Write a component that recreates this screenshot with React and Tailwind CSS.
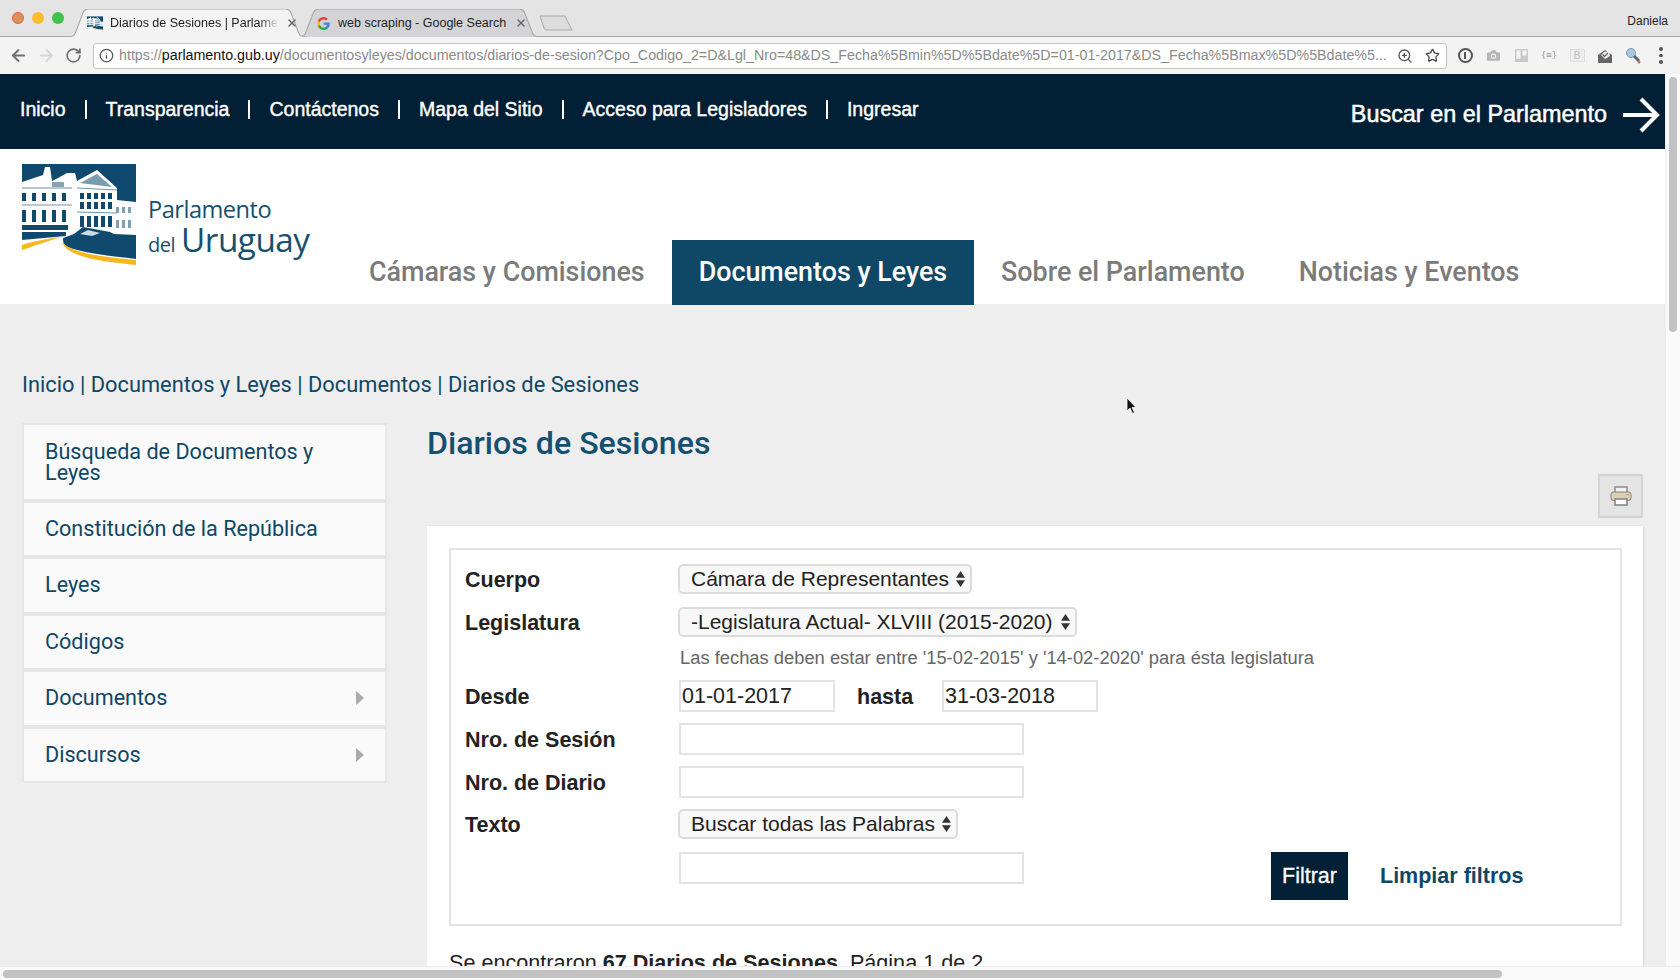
import React from "react";
import { ArrowLeft, ArrowRight, RotateCw, Info, ZoomIn, Star, Camera, X } from "lucide-react";

const navLinks = ["Inicio", "Transparencia", "Contáctenos", "Mapa del Sitio", "Acceso para Legisladores", "Ingresar"];
const tabs = ["Cámaras y Comisiones", "Documentos y Leyes", "Sobre el Parlamento", "Noticias y Eventos"];
const menu = ["Constitución de la República", "Leyes", "Códigos", "Documentos", "Discursos"];
const crumbs = ["Inicio", "Documentos y Leyes", "Documentos", "Diarios de Sesiones"];

const LogoMark = ({ className }) => (
  <svg viewBox="0 0 114 101" className={className}>
    <rect width="114" height="101" fill="#fff" />
    <rect width="114" height="72" fill="#0f4a6e" />
    {/* building */}
    <path d="M0 18 L18 12 L21 11 L23 3 L28 3 L30 17 L36 14 L45 9 L53 9 L55 17 L75 6 L95 24 L95 36 L114 38 L114 72 L60 72 L40 73 L0 81 Z" fill="#fff" />
    <path d="M58 19 L75 10 L90 23 Z" fill="#0f4a6e" opacity="0.55" />
    <path d="M0 24 L50 24 M55 24 L95 26 M0 41 L50 41 M55 48 L95 49" stroke="#0f4a6e" strokeWidth="1" opacity="0.6" />
    <path d="M30 18 H42 V23 H30 Z" fill="#0f4a6e" opacity="0.5" />
    {[0, 10, 20, 30, 40].map((x) => (
      <g key={x} fill="#0f4a6e">
        <rect x={x} y="29" width="4" height="8" />
        <rect x={x} y="46" width="4" height="12" />
      </g>
    ))}
    {[58, 65, 72, 79, 86].map((x) => (
      <g key={x} fill="#0f4a6e">
        <rect x={x} y="29" width="4" height="6" />
        <rect x={x} y="38" width="4" height="7" />
        <rect x={x} y="52" width="4" height="11" />
      </g>
    ))}
    {[94, 100, 106].map((x) => (
      <g key={x} fill="#7f9fb3">
        <rect x={x} y="43" width="3" height="6" />
        <rect x={x} y="56" width="3" height="8" />
      </g>
    ))}
    <path d="M0 61 H46 V66 H0 Z M0 68 H44 V72 L0 76 Z" fill="#0f4a6e" />
    <path d="M41 74 L52 70 L61 63 L72 65 L88 68 L92 70 L114 71 L114 95 C90 92 60 89 46 83 C42 81 41 79 41 74 Z" fill="#0f4a6e" />
    <path d="M58 70 L66 66 L78 69 L70 72 Z" fill="#fff" opacity="0.8" />
    <path d="M40 78 C50 90 85 93 114 96 L114 101 C85 98 45 94 40 78 Z" fill="#f9b71f" />
    <path d="M0 81 C12 77 28 74 40 73 C28 76 12 82 0 86 Z" fill="#f9b71f" />
  </svg>
);

const GoogleG = () => (
  <svg viewBox="0 0 24 24" className="w-[15px] h-[15px] shrink-0">
    <path d="M22 12.200c0-.7-.1-1.400-.2-2H12v3.900h5.600c-.2 1.300-1 2.400-2.100 3.100v2.500h3.400C20.800 18 22 15.400 22 12.200z" fill="#4285f4" />
    <path d="M12 22.500c2.800 0 5.200-.9 6.900-2.500l-3.400-2.600c-.9.600-2.100 1-3.500 1-2.700 0-5-1.800-5.800-4.300H3.100v2.700C4.800 20.200 8.100 22.500 12 22.500z" fill="#34a853" />
    <path d="M6.200 14.100c-.2-.6-.3-1.300-.3-2.100s.1-1.400.3-2.100V7.200H3.100C2.400 8.600 2 10.200 2 12s.4 3.400 1.100 4.800z" fill="#fbbc05" />
    <path d="M12 5.600c1.500 0 2.900.5 4 1.500l3-3C17.200 2.500 14.800 1.500 12 1.500 8.100 1.500 4.800 3.800 3.100 7.200l3.100 2.700C7 7.400 9.300 5.600 12 5.600z" fill="#ea4335" />
  </svg>
);

const TabShape = ({ fill, stroke }) => (
  <svg viewBox="0 0 220 28" preserveAspectRatio="none" className="absolute inset-0 w-full h-full">
    <path d="M0 28 C6 28 7 26 8 23 L15 3 C16 1 17 0 20 0 H200 C203 0 204 1 205 3 L212 23 C213 26 214 28 220 28" fill={fill} stroke={stroke} />
  </svg>
);

const ChromeBar = () => (
  <div className="h-[74px] shrink-0 font-['Liberation_Sans',sans-serif]">
    <div className="h-[37px] bg-[#e4e4e4] border-b border-[#a9a9a9] flex items-end pl-[12px] relative">
      <div className="flex gap-[8px] items-center self-center mr-[3px]">
        <span className="w-[12px] h-[12px] rounded-full bg-[#d9925c] border border-[#e2643c]" />
        <span className="w-[12px] h-[12px] rounded-full bg-[#fcbc2e]" />
        <span className="w-[12px] h-[12px] rounded-full bg-[#3fc34a]" />
      </div>
      <div className="relative w-[240px] h-[28px] mb-[-1px] flex items-center pl-[20px] pr-[9px] gap-[7px] z-10">
        <TabShape fill="#f3f3f3" stroke="#a9a9a9" />
        <LogoMark className="relative w-[16px] h-[15px] shrink-0" />
        <span className="relative flex-1 overflow-hidden whitespace-nowrap text-[12.500px] text-[#222] [mask-image:linear-gradient(to_right,black_88%,transparent)]">Diarios de Sesiones | Parlamento</span>
        <X className="relative w-[12px] h-[12px] text-[#666] shrink-0" strokeWidth={3} />
      </div>
      <div className="relative w-[244px] h-[28px] mb-[-1px] ml-[-10px] flex items-center pl-[19px] pr-[14px] gap-[7px]">
        <TabShape fill="#d4d4d6" stroke="#a9a9a9" />
        <span className="relative"><GoogleG /></span>
        <span className="relative flex-1 overflow-hidden whitespace-nowrap text-[12.500px] text-[#222]">web scraping - Google Search</span>
        <X className="relative w-[12px] h-[12px] text-[#666] shrink-0" strokeWidth={3} />
      </div>
      <svg viewBox="0 0 34 16" className="w-[34px] h-[16px] mb-[5px] ml-[-2px]">
        <path d="M1 1 H25 C26 1 27 2 27 3 L33 15 H7 C6 15 5 14 5 13 Z" fill="#dcdcdc" stroke="#a9a9a9" />
      </svg>
      <span className="absolute right-[12px] top-[12px] text-[12px] text-[#222]">Daniela</span>
    </div>
    <div className="h-[37px] bg-[#f3f3f3] flex items-center">
      <div className="w-[93px] flex items-center pl-[9px] gap-[9px] shrink-0">
        <ArrowLeft className="w-[19px] h-[19px] text-[#6e6e6e]" strokeWidth={2.4} />
        <ArrowRight className="w-[19px] h-[19px] text-[#d6d6d6]" strokeWidth={2.4} />
        <RotateCw className="w-[17px] h-[17px] text-[#6e6e6e]" strokeWidth={2.4} />
      </div>
      <div className="w-[1354px] h-[26px] bg-white border border-[#c4c4c4] rounded-[3px] flex items-center pl-[5px] pr-[6px] shrink-0">
        <Info className="w-[15px] h-[15px] text-[#555] shrink-0" strokeWidth={2} />
        <span className="flex-1 min-w-0 ml-[5px] overflow-hidden whitespace-nowrap text-[14.250px] text-[#8a8a8a]">
          https://<span className="text-[#111]">parlamento.gub.uy</span>/documentosyleyes/documentos/diarios-de-sesion?Cpo_Codigo_2=D&amp;Lgl_Nro=48&amp;DS_Fecha%5Bmin%5D%5Bdate%5D=01-01-2017&amp;DS_Fecha%5Bmax%5D%5Bdate%5...
        </span>
        <ZoomIn className="w-[16px] h-[16px] text-[#555] shrink-0 ml-[8px]" strokeWidth={2} />
        <Star className="w-[15px] h-[15px] text-[#444] shrink-0 ml-[12px]" strokeWidth={2} />
      </div>
      <div className="flex-1 grid grid-cols-[repeat(8,28px)] justify-items-center items-center pl-[4px]">
        <span className="w-[15px] h-[15px] rounded-full border-2 border-[#555] flex items-center justify-center">
          <span className="w-[2px] h-[7px] bg-[#555]" />
        </span>
        <Camera className="w-[17px] h-[17px] text-[#f3f3f3]" fill="#b5b5b5" strokeWidth={1.500} />
        <svg viewBox="0 0 14 14" className="w-[13px] h-[13px]">
          <rect width="14" height="14" fill="#c8c8c8" />
          <rect x="1.500" y="1.500" width="4.500" height="9" fill="#f3f3f3" />
          <rect x="8" y="1.500" width="4.500" height="5.500" fill="#f3f3f3" />
        </svg>
        <span className="text-[9px] text-[#999] font-['DejaVu_Sans_Mono',monospace]">{"{≡}"}</span>
        <span className="w-[15px] h-[13px] border border-[#ddd] bg-[#eee] text-[10px] leading-[11px] text-center text-[#bbb]">B</span>
        <svg viewBox="0 0 16 16" className="w-[16px] h-[16px]">
          <path d="M1 7 L8 2 L15 7 V15 H1 Z" fill="#666" />
          <path d="M4 7 L7 4 L12 3 L13 8 L8 11 Z" fill="#f3f3f3" />
          <path d="M5.500 6.500 L7.500 8.500 L11 5" fill="none" stroke="#666" strokeWidth="1.300" />
        </svg>
        <svg viewBox="0 0 18 18" className="w-[18px] h-[18px]">
          <circle cx="7" cy="6" r="4.500" fill="#a9c7dd" stroke="#7e9db5" />
          <path d="M10 9 L15 14" stroke="#4f6880" strokeWidth="3" />
          <circle cx="15" cy="15" r="1.500" fill="#c8734f" />
        </svg>
        <span className="flex flex-col gap-[3px]">
          <span className="w-[3.500px] h-[3.500px] rounded-full bg-[#555]" />
          <span className="w-[3.500px] h-[3.500px] rounded-full bg-[#555]" />
          <span className="w-[3.500px] h-[3.500px] rounded-full bg-[#555]" />
        </span>
      </div>
    </div>
  </div>
);

const SelectBox = ({ children, className }) => (
  <div className={`h-[30px] border-2 border-[#dcdcdc] rounded-[5px] bg-[#f8f8f8] flex items-center justify-between pl-[11px] pr-[5px] text-[21px] text-[#222] whitespace-nowrap ${className}`}>
    <span>{children}</span>
    <svg viewBox="0 0 10 20" className="w-[9px] h-[18px]">
      <path d="M5 1 L10 8.500 H0 Z M5 19 L10 11.500 H0 Z" fill="#333" />
    </svg>
  </div>
);

const TextField = ({ value, className }) => (
  <input
    readOnly
    value={value}
    className={`h-[32px] border-2 border-[#e3e3e3] bg-white px-[1px] text-[21.500px] text-[#222] outline-none ${className}`}
  />
);

const Label = ({ children }) => (
  <div className="w-[214px] shrink-0 mt-[2px] font-bold text-[21.500px] text-[#222]">{children}</div>
);

const App = () => {
  return (
    <div className="w-[1680px] h-[980px] overflow-hidden flex flex-col bg-white relative">
      <ChromeBar />

      <div className="flex h-[892px] shrink-0">
        <div className="w-[1665px] overflow-hidden bg-[#eeeeee]">
          {/* top nav */}
          <div className="h-[75px] bg-[#022035] flex items-center justify-between pl-[20px] pr-[5px] text-white font-['Liberation_Sans',sans-serif]">
            <div className="flex items-center mt-[-4px]">
              {navLinks.map((link, i) => (
                <div key={link} className="flex items-center">
                  {i > 0 && <span className="w-[2px] h-[19px] bg-white mx-[19px]" />}
                  <span className="text-[19.500px] [-webkit-text-stroke:0.4px_white]">{link}</span>
                </div>
              ))}
            </div>
            <div className="flex items-center mt-[6px]">
              <span className="text-[23.400px] [-webkit-text-stroke:0.5px_white]">Buscar en el Parlamento</span>
              <svg viewBox="0 0 38 38" className="w-[38px] h-[38px] ml-[15px]">
                <path d="M1 19 H35 M19 3 L35 19 L19 35" fill="none" stroke="#fff" strokeWidth="4" />
              </svg>
            </div>
          </div>

          {/* logo + tabs */}
          <div className="h-[155px] bg-white flex items-end relative">
            <div className="w-[342px] shrink-0 self-start flex pl-[22px] pt-[15px]">
              <LogoMark className="w-[114px] h-[101px] shrink-0" />
              <div className="ml-[12px] mt-[31px] text-[#17506f] font-['Open_Sans',sans-serif]">
                <div className="text-[23.600px] leading-[28px] tracking-[-0.5px]">Parlamento</div>
                <div className="flex items-baseline leading-[33px] tracking-[-0.5px]">
                  <span className="text-[20px] mr-[6px]">del</span>
                  <span className="text-[33.300px]">Uruguay</span>
                </div>
              </div>
            </div>
            <div className="flex mb-[-1px] relative font-['Roboto',sans-serif] text-[26.850px] font-medium">
              {tabs.map((tab, i) => (
                <div
                  key={tab}
                  className={i === 1
                    ? "h-[65px] px-[27px] flex items-center bg-[#0f4766] text-white"
                    : "h-[65px] px-[27px] flex items-center text-[#7b7b7b]"}
                >
                  {tab}
                </div>
              ))}
            </div>
          </div>

          <div className="pl-[22px] pr-[22px]">
            {/* breadcrumb */}
            <div className="pt-[65px] h-[119px] text-[21.850px] leading-[32px] text-[#0f4766] font-['Roboto',sans-serif] whitespace-nowrap">
              {crumbs.join(" | ")}
            </div>

            <div className="flex items-start font-['Liberation_Sans',sans-serif]">
              {/* side menu */}
              <div className="w-[365px] shrink-0 mr-[40px] font-['Roboto',sans-serif] text-[21.600px] text-[#0f4766]">
                <div className="h-[78px] border-2 border-[#e6e6e6] bg-[#fafafa] pl-[21px] pr-[40px] pb-[1px] flex items-center leading-[21px]">
                  Búsqueda de Documentos y Leyes
                </div>
                {menu.map((item) => (
                  <div key={item} className="h-[56.400px] border-2 border-[#e6e6e6] bg-[#fafafa] pl-[21px] pr-[21px] flex items-center justify-between">
                    <span>{item}</span>
                    {(item === "Documentos" || item === "Discursos") && (
                      <span className="w-0 h-0 border-y-[7px] border-y-transparent border-l-[8px] border-l-[#aaaaaa]" />
                    )}
                  </div>
                ))}
              </div>

              {/* content */}
              <div className="flex-1 min-w-0">
                <h1 className="text-[32.150px] leading-[40px] font-medium text-[#14506f] font-['Roboto',sans-serif] box-content">Diarios de Sesiones</h1>
                <div className="flex justify-end mt-[11px]">
                  <div className="w-[45px] h-[44px] border-2 border-[#d4d4d4] bg-[#e4e4e4] flex items-center justify-center">
                    <svg viewBox="0 0 22 20" className="w-[22px] h-[20px]">
                      <rect x="5" y="1" width="12" height="6" fill="#f4f4f4" stroke="#8a8a8a" strokeWidth="1.500" />
                      <rect x="1" y="6" width="20" height="8.500" rx="2.500" fill="#dccfb6" stroke="#808080" />
                      <rect x="16.500" y="8" width="2.500" height="1.500" fill="#e5a33a" />
                      <rect x="5" y="13" width="12" height="6" fill="#fff" stroke="#808080" strokeWidth="1.500" />
                    </svg>
                  </div>
                </div>
                <div className="mt-[8px] bg-white pt-[22px] px-[22px] shadow-[1px_0_2px_rgba(0,0,0,0.1)] h-[500px]">
                  <div className="h-[378px] w-[1173px] border-2 border-[#e3e3e3] pl-[14px] pt-[14px] relative">
                    <div className="flex items-center h-[30px]">
                      <Label>Cuerpo</Label>
                      <SelectBox className="w-[294px] ml-[-1px]">Cámara de Representantes</SelectBox>
                    </div>
                    <div className="flex items-center h-[30px] mt-[13px]">
                      <Label>Legislatura</Label>
                      <SelectBox className="w-[399px] ml-[-1px]">-Legislatura Actual- XLVIII (2015-2020)</SelectBox>
                    </div>
                    <div className="ml-[215px] mt-[8px] h-[26px] leading-[26px] text-[18.350px] text-[#666]">
                      Las fechas deben estar entre '15-02-2015' y '14-02-2020' para ésta legislatura
                    </div>
                    <div className="flex items-center h-[32px] mt-[9px]">
                      <Label>Desde</Label>
                      <TextField value="01-01-2017" className="w-[156px]" />
                      <span className="ml-[22px] mt-[2px] w-[85px] font-bold text-[21.500px] text-[#222]">hasta</span>
                      <TextField value="31-03-2018" className="w-[156px]" />
                    </div>
                    <div className="flex items-center h-[32px] mt-[11px]">
                      <Label>Nro. de Sesión</Label>
                      <TextField value="" className="w-[345px]" />
                    </div>
                    <div className="flex items-center h-[32px] mt-[11px]">
                      <Label>Nro. de Diario</Label>
                      <TextField value="" className="w-[345px]" />
                    </div>
                    <div className="flex items-center h-[30px] mt-[11px]">
                      <Label>Texto</Label>
                      <SelectBox className="w-[280px] ml-[-1px]">Buscar todas las Palabras</SelectBox>
                    </div>
                    <div className="flex items-start mt-[13px] pl-[214px]">
                      <TextField value="" className="w-[345px]" />
                      <div className="ml-[247px] w-[77px] h-[48px] bg-[#022035] text-white text-[21.500px] flex items-center justify-center [-webkit-text-stroke:0.3px_white]">Filtrar</div>
                      <div className="ml-[32px] h-[48px] flex items-center font-bold text-[21.500px] text-[#0f4766]">Limpiar filtros</div>
                    </div>
                  </div>
                  <div className="mt-[24px] text-[21.600px] leading-[26px] text-[#222]">
                    Se encontraron <b>67 Diarios de Sesiones</b>. Página 1 de 2
                  </div>
                </div>
              </div>
            </div>
          </div>
        </div>

        {/* vertical scrollbar */}
        <div className="w-[15px] bg-[#fafafa] border-l border-[#ececec] pl-[3px] pt-[3px] shrink-0">
          <div className="w-[8px] h-[255px] rounded-full bg-[#c2c2c2]" />
        </div>
      </div>

      {/* horizontal scrollbar */}
      <div className="h-[14px] bg-[#fafafa] border-t border-[#ececec] pl-[3px] pt-[3px] shrink-0">
        <div className="w-[1499px] h-[8px] rounded-full bg-[#c2c2c2]" />
      </div>

      {/* mouse pointer */}
      <svg viewBox="0 0 12 18" className="absolute left-[1126px] top-[397px] w-[12px] h-[18px]">
        <path d="M1 1 L1 14 L4 11 L6.500 16.500 L8.500 15.500 L6 10.500 L10 10.500 Z" fill="#111" stroke="#fff" strokeWidth="0.800" />
      </svg>
    </div>
  );
};

export default App;
